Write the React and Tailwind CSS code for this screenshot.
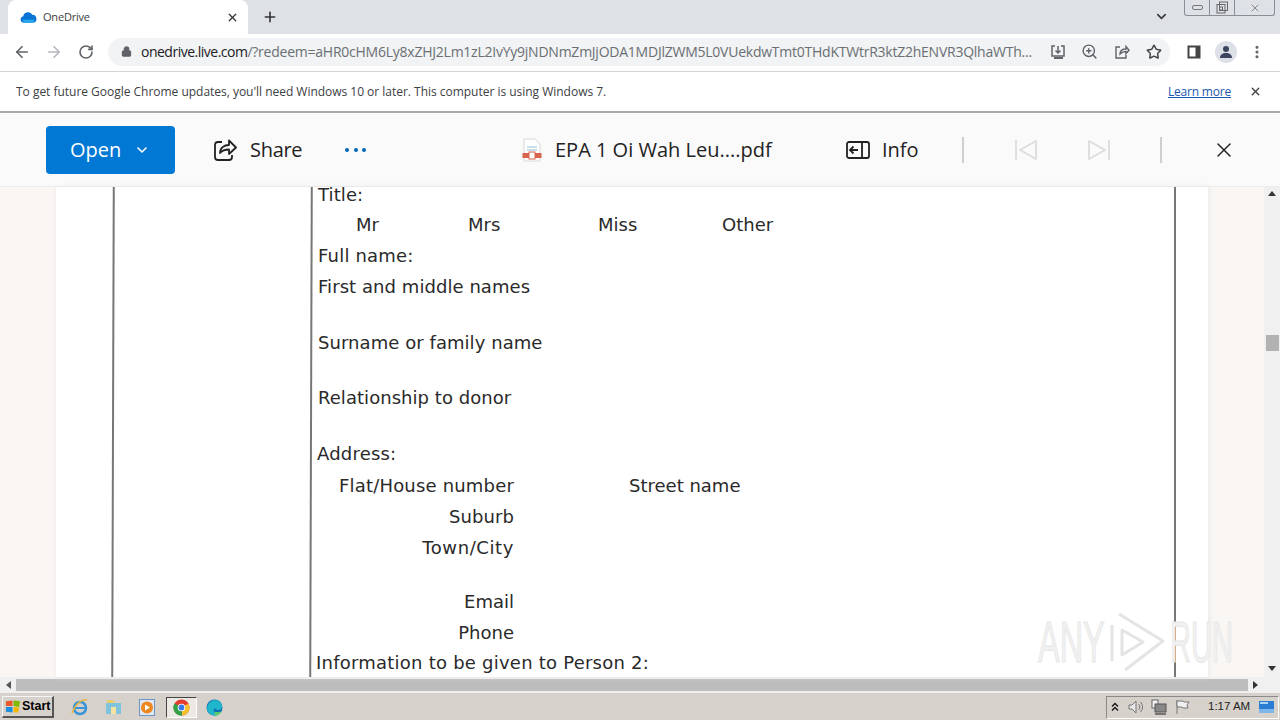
import React from "react";
import { ArrowLeft, ArrowRight, RotateCw, Lock, Plus, X, ChevronDown, ZoomIn, Star, EllipsisVertical } from "lucide-react";

const ui = { fontFamily: '"Open Sans","Noto Sans",sans-serif' };
const doc = { fontFamily: '"DejaVu Sans",sans-serif' };

function Row({ h, pl = 6, children }) {
  return <div className="flex items-center whitespace-nowrap" style={{ height: h, paddingLeft: pl }}>{children}</div>;
}
function R({ h, children, extra }) {
  return (
    <div className="flex items-center whitespace-nowrap" style={{ height: h }}>
      <span className="w-[202px] text-right">{children}</span>
      {extra}
    </div>
  );
}

function Cloud({ className }) {
  return (
    <svg viewBox="0 0 18 12" className={className}>
      <path d="M4 12a3.5 3.5 0 0 1-.6-6.9A5.2 5.2 0 0 1 13 3.6 4.3 4.3 0 0 1 14.4 12z" fill="#0a74d6" />
      <path d="M3 8.8h11.8a3 3 0 0 1-.4 3.2H4A3.5 3.5 0 0 1 3 8.8z" fill="#28a8ea" />
    </svg>
  );
}

export default function App() {
  return (
    <div className="flex h-[720px] w-[1280px] flex-col overflow-hidden bg-white" style={ui}>
      {/* tab strip */}
      <div className="flex h-[34px] shrink-0 items-start bg-[#dee1e6]">
        <div className="ml-[8px] flex h-[34px] w-[240px] items-center rounded-t-[8px] bg-white pl-[12px] pr-[9px]">
          <Cloud className="h-[12px] w-[17px]" />
          <span className="ml-[6px] text-[11px] tracking-[-0.2px] text-[#3c4043]">OneDrive</span>
          <X className="ml-auto h-[13px] w-[13px] text-[#333]" strokeWidth={2.4} />
        </div>
        <Plus className="ml-[14px] mt-[9px] h-[16px] w-[16px] text-[#333]" strokeWidth={2.4} />
        <ChevronDown className="ml-auto mt-[9px] h-[15px] w-[15px] text-[#333]" strokeWidth={2.4} />
        <div className="ml-[15px] mr-[5px] flex h-[16px] w-[91px] rounded-b-[3px] border border-t-0 border-[#8a8f96] text-[#666]">
          <div className="flex w-[25px] items-center justify-center border-r border-[#8a8f96]"><div className="h-[5px] w-[11px] rounded-[2px] border border-[#777]" /></div>
          <div className="flex w-[25px] items-center justify-center border-r border-[#8a8f96]">
            <svg width="13" height="13" viewBox="0 0 13 13" fill="none" stroke="#666"><rect x="1" y="3.5" width="8" height="8.5" /><rect x="3.5" y="1" width="8" height="8.5" /><rect x="3.5" y="6" width="3" height="3" /></svg>
          </div>
          <div className="flex flex-1 items-center justify-center"><X className="h-[12px] w-[12px] text-[#888]" strokeWidth={2} /></div>
        </div>
      </div>

      {/* toolbar */}
      <div className="flex h-[38px] shrink-0 items-center border-b border-[#d4d4d4] bg-white pb-[2px]">
        <ArrowLeft className="ml-[13px] h-[18px] w-[18px] text-[#5f6368]" strokeWidth={2.2} />
        <ArrowRight className="ml-[14px] h-[18px] w-[18px] text-[#b4b7bb]" strokeWidth={2.2} />
        <RotateCw className="ml-[15px] h-[16px] w-[16px] text-[#5f6368]" strokeWidth={2.4} />
        <div className="ml-[14px] flex h-[28px] w-[1062px] items-center rounded-full bg-[#f1f3f4] pl-[13px]">
          <Lock className="h-[11px] w-[11px] fill-[#5f6368] text-[#5f6368]" strokeWidth={2.4} />
          <span className="ml-[9px] w-[895px] overflow-hidden whitespace-nowrap text-[14px] tracking-[-0.24px] text-[#6b6f73]">
            <span className="tracking-[-0.5px] text-[#202124]">onedrive.live.com</span>/?redeem=aHR0cHM6Ly8xZHJ2Lm1zL2IvYy9jNDNmZmJjODA1MDJlZWM5L0VUekdwTmt0THdKTWtrR3ktZ2hENVR3QlhaWTh...
          </span>
          <svg className="ml-[14px]" width="16" height="16" viewBox="0 0 16 16" fill="none" stroke="#5f6368" strokeWidth="1.5"><path d="M5 2H2v10h12V2h-3M8 2v7M5.5 6.5 8 9l2.5-2.5" /><path d="M4 14h9" strokeWidth="2" /></svg>
          <ZoomIn className="ml-[15px] h-[17px] w-[17px] text-[#5f6368]" strokeWidth={2} />
          <svg className="ml-[16px]" width="16" height="16" viewBox="0 0 16 16" fill="none" stroke="#5f6368" strokeWidth="1.4"><path d="M6 3H2v11h10v-3" /><path d="M6 10c0-3.5 2-5 6-5V2.5l3 3.7-3 3.5V7.5c-3 0-4.5.8-6 2.5z" /></svg>
          <Star className="ml-[16px] h-[16px] w-[16px] text-[#444]" strokeWidth={2.2} />
        </div>
        <svg className="ml-[17px]" width="14" height="14" viewBox="0 0 14 14"><rect x="0.5" y="0.5" width="13" height="13" fill="#444" /><rect x="2.5" y="2.5" width="6" height="9" fill="#fff" /></svg>
        <div className="ml-[14px] flex h-[22px] w-[22px] items-center justify-center overflow-hidden rounded-full bg-[#dde1e7]">
          <svg width="14" height="14" viewBox="0 0 14 14" fill="#3c4560"><circle cx="7" cy="4" r="3" /><path d="M1 13c0-3.5 2.5-5 6-5s6 1.5 6 5z" /></svg>
        </div>
        <EllipsisVertical className="ml-[12px] h-[16px] w-[16px] text-[#5f6368]" strokeWidth={2.6} />
      </div>

      {/* infobar */}
      <div className="flex h-[41px] shrink-0 items-center border-b-2 border-[#a8a8a8] bg-white pl-[16px] text-[12px] tracking-[-0.02px] text-[#3c4043]">
        <span>To get future Google Chrome updates, you'll need Windows 10 or later. This computer is using Windows 7.</span>
        <span className="ml-auto tracking-[-0.2px] text-[#1a56b0] underline">Learn more</span>
        <X className="ml-[18px] mr-[18px] h-[13px] w-[13px] text-[#444]" strokeWidth={2.6} />
      </div>

      {/* onedrive bar */}
      <div className="flex h-[74px] shrink-0 items-center border-b border-[#ececec] bg-[#fafafa] text-[20px] text-[#222]">
        <div className="ml-[46px] flex h-[48px] w-[129px] items-center rounded-[4px] bg-[#0078d4] pl-[24px] text-white">
          <span className="w-[51px]">Open</span>
          <ChevronDown className="ml-[13px] h-[16px] w-[16px]" strokeWidth={2.4} />
        </div>
        <svg className="ml-[39px]" width="23" height="23" viewBox="0 0 23 23" fill="none" stroke="#222" strokeWidth="1.8"><path d="M8 4H4a3 3 0 0 0-3 3v12a3 3 0 0 0 3 3h11a3 3 0 0 0 3-3v-2" /><path d="M6 15c0-5 4-8 9-8V2.5l7 7-7 6.5v-4.5c-4 0-7 1-9 3.5z" strokeLinejoin="round" /></svg>
        <span className="ml-[13px] w-[52px] tracking-[-0.3px]">Share</span>
        <div className="ml-[43px] flex w-[21px] justify-between">
          <i className="h-[4px] w-[4px] rounded-full bg-[#0067b8]" /><i className="h-[4px] w-[4px] rounded-full bg-[#0067b8]" /><i className="h-[4px] w-[4px] rounded-full bg-[#0067b8]" />
        </div>
        <svg className="ml-[156px]" width="20" height="24" viewBox="0 0 20 24" fill="none"><path d="M2 1h11l5 5v17H2z" fill="#fff" stroke="#d8d8d8" /><path d="M5 9h10M5 12h10" stroke="#b9d3e4" strokeWidth="1.5" /><rect x="0.5" y="15" width="19" height="5" fill="#d9634c" /><rect x="7" y="14" width="6" height="7" fill="#fff" stroke="#d9634c" /></svg>
        <span className="ml-[13px] w-[218px] whitespace-nowrap">EPA 1 Oi Wah Leu....pdf</span>
        <svg className="ml-[73px]" width="24" height="18" viewBox="0 0 24 18" fill="none" stroke="#222" strokeWidth="1.8"><rect x="1" y="1" width="22" height="16" rx="2" /><path d="M16 1v16M12 9H4M7.5 5.5 4 9l3.5 3.5" /></svg>
        <span className="ml-[12px] w-[36px]">Info</span>
        <div className="ml-[44px] h-[26px] w-[2px] bg-[#cfcfcf]" />
        <svg className="ml-[50px]" width="24" height="22" viewBox="0 0 24 22" fill="none" stroke="#dcdcdc" strokeWidth="1.8"><path d="M2 1v20M22 2v18L6 11z" strokeLinejoin="round" /></svg>
        <svg className="ml-[49px]" width="24" height="22" viewBox="0 0 24 22" fill="none" stroke="#dcdcdc" strokeWidth="1.8"><path d="M22 1v20M2 2v18l16-9z" strokeLinejoin="round" /></svg>
        <div className="ml-[49px] h-[26px] w-[2px] bg-[#cfcfcf]" />
        <X className="ml-[50px] h-[24px] w-[24px] text-[#222]" strokeWidth={1.5} />
      </div>

      {/* document */}
      <div className="relative flex min-h-0 flex-1">
        <div className="flex min-w-0 flex-1 bg-[#f9f6f4] pl-[56px] pr-[56px]">
          <div className="flex flex-1 bg-white pl-[56px] text-[18px] leading-none text-[#2a2a2a] shadow-[1px_0_5px_#e8e8e8]" style={doc}>
            <div className="h-full w-[200px] shrink-0 -skew-x-[0.18deg] border-x-2 border-[#777]" />
            <div className="h-full w-[864px] shrink-0 border-r-2 border-[#777]">
              <Row h={15}><span className="leading-[15px] tracking-[0.1px]">Title:</span></Row>
              <div className="mt-[8px] flex h-[30px] items-center pl-[44px]">
                <span className="w-[112px]">Mr</span><span className="w-[130px]">Mrs</span><span className="w-[124px]">Miss</span><span>Other</span>
              </div>
              <Row h={31}><span className="tracking-[0.2px]">Full name:</span></Row>
              <Row h={31}><span className="tracking-[0.06px]">First and middle names</span></Row>
              <div className="h-[25px]" />
              <Row h={31}><span className="tracking-[0.06px]">Surname or family name</span></Row>
              <div className="h-[24px]" />
              <Row h={31}><span className="tracking-[0.05px]">Relationship to donor</span></Row>
              <div className="h-[25px]" />
              <Row h={31} pl={5}><span className="tracking-[0.2px]">Address:</span></Row>
              <div className="h-[1px]" />
              <R h={32} extra={<span className="ml-[115px]">Street name</span>}><span className="tracking-[0.18px]">Flat/House number</span></R>
              <R h={30}><span className="tracking-[0.1px]">Suburb</span></R>
              <R h={31}><span className="tracking-[0.6px]">Town/City</span></R>
              <div className="h-[23px]" />
              <R h={31}>Email</R>
              <R h={31}>Phone</R>
              <Row h={29} pl={4}><span className="tracking-[0.23px]">Information to be given to Person 2:</span></Row>
            </div>
          </div>
        </div>
        <div className="flex w-[16px] shrink-0 flex-col items-center bg-[#f0f0f0]">
          <div className="mt-[4px] h-0 w-0 border-x-[4px] border-b-[5px] border-x-transparent border-b-[#333]" />
          <div className="mt-[139px] h-[16px] w-[13px] bg-[#b2b2b2]" />
          <div className="mt-auto mb-[6px] h-0 w-0 border-x-[4px] border-t-[5px] border-x-transparent border-t-[#333]" />
        </div>

        {/* watermark */}
        <div className="pointer-events-none absolute bottom-[4px] left-[1038px] flex h-[63px] items-center text-[58px] leading-none text-[#f1f1f1] [-webkit-text-stroke:1px_#e6e6e6]" style={{ fontFamily: '"Liberation Sans",sans-serif' }}>
          <span className="inline-block w-[72px] origin-left scale-x-[0.56]">ANY</span>
          <svg width="56" height="63" viewBox="0 0 56 63" fill="none" stroke="#e4e4e4" strokeWidth="3" strokeLinejoin="round"><path d="M2 15v36" /><path d="M9 4 53 31 15 60" /><path d="M12 20l21 12-21 13z" /></svg>
          <span className="ml-[4px] inline-block w-[62px] origin-left scale-x-[0.5]">RUN</span>
        </div>
      </div>

      {/* horizontal scrollbar */}
      <div className="flex h-[16px] shrink-0 items-center bg-[#f0f0f0]">
        <div className="ml-[6px] h-0 w-0 border-y-[4px] border-r-[5px] border-y-transparent border-r-[#555]" />
        <div className="ml-[5px] h-[12px] w-[1232px] bg-[#bdbdbd]" />
        <div className="ml-[5px] h-0 w-0 border-y-[4px] border-l-[5px] border-y-transparent border-l-[#333]" />
      </div>

      {/* taskbar */}
      <div className="flex h-[27px] shrink-0 items-center bg-[#d6d1ca] pt-[1px]" style={{ fontFamily: '"Liberation Sans",sans-serif' }}>
        <div className="ml-[2px] flex h-[22px] w-[52px] items-center border border-b-2 border-r-2 border-[#f5f5f5] border-b-[#555] border-r-[#555] bg-[#d6d1ca] pl-[2px] text-[12.5px] font-bold text-black">
          <svg width="16" height="15" viewBox="0 0 17 15"><path d="M1 2 8 1v6H1z" fill="#e8582c" /><path d="M9 1l7 1-1 6-6-1z" fill="#7fba00" /><path d="M1 8h7v6l-7-1z" fill="#1a8fe0" /><path d="M9 8l6 .5-1 5.5-5-.5z" fill="#f5b800" /></svg>
          <span className="ml-[1px]">Start</span>
        </div>
        <svg className="ml-[17px]" width="18" height="18" viewBox="0 0 18 18" fill="none"><circle cx="9" cy="10" r="6" stroke="#3a95d8" strokeWidth="2.5" /><path d="M3 10h12" stroke="#3a95d8" strokeWidth="2" /><path d="M1 15C5 5 11 1 16 2" stroke="#e8b33a" strokeWidth="1.5" /></svg>
        <svg className="ml-[16px]" width="17" height="16" viewBox="0 0 17 16"><path d="M1 4h15v11H1z" fill="#7fc3dc" /><path d="M2 1h6l2 3H2z" fill="#eccb6a" /><path d="M6 8h5v7H6z" fill="#f4e2a0" /></svg>
        <svg className="ml-[17px]" width="16" height="17" viewBox="0 0 16 17"><rect x="0.5" y="0.5" width="15" height="16" fill="#dfe8f2" stroke="#6f95c4" /><circle cx="8" cy="8.5" r="6" fill="#ee8720" /><path d="M6 5.5v6l5-3z" fill="#fff" /></svg>
        <div className="ml-[11px] flex h-[21px] w-[31px] items-center justify-center border border-b-white border-r-white border-l-[#444] border-t-[#444] bg-[#ece9e4]">
          <svg width="17" height="17" viewBox="0 0 17 17"><circle cx="8.5" cy="8.5" r="8" fill="#e33b2e" /><path d="M8.5 8.5 15.5 4.5A8 8 0 0 1 9 16.5z" fill="#f6c02c" /><path d="M8.5 8.5 9 16.5A8 8 0 0 1 1.5 4.5z" fill="#2fa24a" /><circle cx="8.5" cy="8.5" r="3.8" fill="#fff" /><circle cx="8.5" cy="8.5" r="2.9" fill="#3b78e7" /></svg>
        </div>
        <svg className="ml-[9px]" width="17" height="17" viewBox="0 0 17 17"><circle cx="8.5" cy="8.5" r="8" fill="#0f6cbd" /><path d="M1 9c1-5 4-8 8-8 4 0 7 3 7 7 0 2-2 3-4 3s-3-1-3-2c-2 1-2 5 3 7-6 2-11-2-11-7z" fill="#1fb6c9" /><path d="M9 16.5c3 0 6-2 7.5-5-2 2-6 2-8 1z" fill="#5fd068" /></svg>

        <div className="ml-auto mr-[1px] flex h-[23px] w-[173px] items-center border border-b-white border-r-white border-l-[#8a8a8a] border-t-[#8a8a8a] text-[#222]">
          <svg className="ml-[4px]" width="8" height="10" viewBox="0 0 8 10" fill="none" stroke="#111" strokeWidth="1.3"><path d="M1 4.5 4 1.5l3 3M1 8.5l3-3 3 3" /></svg>
          <svg className="ml-[9px]" width="16" height="16" viewBox="0 0 16 16" fill="none" stroke="#777"><path d="M1 6h3l4-4v12l-4-4H1z" fill="#e8e8e8" /><path d="M10.5 5a4 4 0 0 1 0 6M12.5 3a7 7 0 0 1 0 10" /></svg>
          <svg className="ml-[7px]" width="16" height="16" viewBox="0 0 16 16"><rect x="1" y="1" width="6" height="8" fill="#f5f5f5" stroke="#666" /><rect x="4" y="5" width="11" height="8" fill="#888" stroke="#555" /><path d="M4 15h11" stroke="#555" strokeWidth="1.5" /></svg>
          <svg className="ml-[8px]" width="15" height="16" viewBox="0 0 15 16" fill="#f0f0f0" stroke="#777"><path d="M2 1v14" /><path d="M2 2h6l1 1h5l-2 3 1 3H8L7 8H2z" /></svg>
          <span className="ml-[18px] w-[41px] whitespace-nowrap text-[11.5px]">1:17 AM</span>
          <svg className="ml-[10px]" width="15" height="12" viewBox="0 0 15 12"><rect width="15" height="12" fill="#2b7cd3" /><rect y="8" width="15" height="4" fill="#7fb8e8" /><rect x="1" y="1" width="8" height="2" fill="#a9d3f5" /></svg>
        </div>
      </div>
    </div>
  );
}
